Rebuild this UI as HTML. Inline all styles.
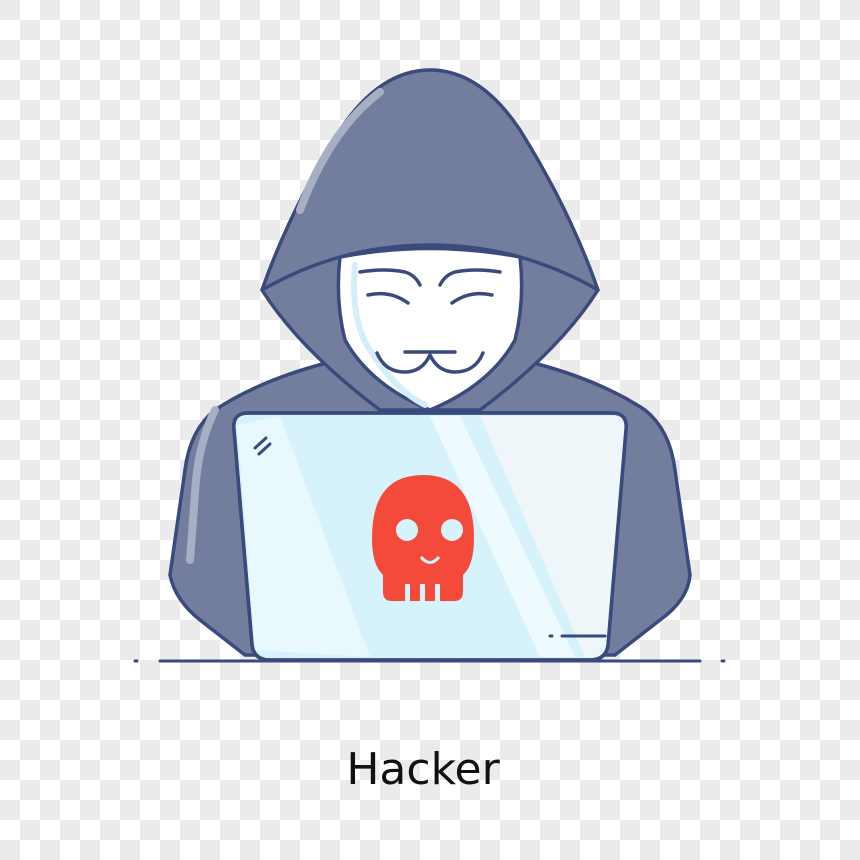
<!DOCTYPE html>
<html><head><style>
html,body{margin:0;padding:0;}
body{width:860px;height:860px;position:relative;overflow:hidden;
background:conic-gradient(#fff 25%,#ebebeb 0 50%,#fff 0 75%,#ebebeb 0);
background-size:40px 40px;}
svg{position:absolute;left:0;top:0}
.t{position:absolute;left:0;width:860px;top:744px;text-align:center;font-family:"DejaVu Sans","Liberation Sans",sans-serif;font-size:44px;color:#111;padding-right:14px;box-sizing:border-box;}
</style></head><body>
<svg width="860" height="860" viewBox="0 0 860 860">
<g stroke="#3b4a7c" stroke-width="3.5" stroke-linejoin="round" stroke-linecap="round">
<path d="M330 362 Q260 380 215 410 Q190 430 185 470 L170 575 Q175 600 200 620 L245 655 L615 655 L660 620 Q688 600 690 575 L675 470 Q670 430 645 410 Q600 380 530 362 Z" fill="#737e9f"/>
<path d="M215 410 Q200 440 196 480 L190 560" fill="none" stroke="#a7afc5" stroke-width="8"/>
<path d="M430 70 Q380 70 340 130 Q290 210 262 290 Q300 350 380 410 L480 410 Q560 350 598 290 Q570 210 520 130 Q480 70 430 70 Z" fill="#737e9f"/>
<path d="M300 210 Q330 130 380 92" fill="none" stroke="#a7afc5" stroke-width="8"/>
<path d="M262 290 Q340 245 430 245 Q520 245 598 290" fill="none"/>
<path d="M340 257 Q430 240 520 257 Q525 300 515 340 Q490 385 430 410 Q370 385 345 340 Q335 300 340 257 Z" fill="#fff"/>
<path d="M355 265 Q350 320 370 350 Q395 390 425 405" fill="none" stroke="#d4eefa" stroke-width="6"/>
<g fill="none">
<path d="M360 272 Q385 268 405 272 Q415 275 420 285"/>
<path d="M500 272 Q475 268 455 272 Q445 275 440 285"/>
<path d="M368 295 Q390 290 408 303"/>
<path d="M492 295 Q470 290 452 303"/>
<path d="M377 353 Q385 372 405 372 Q422 372 430 355 Q438 372 455 372 Q475 372 483 353"/>
<path d="M405 352 L455 352"/>
</g>
<path d="M248 413 L612 413 Q628 413 626 430 L608 645 Q606 660 590 660 L270 660 Q254 660 252 645 L234 430 Q232 413 248 413 Z" fill="#d6f3fc"/>
</g>
<path d="M237 425 L255 650 L370 657 L280 416 Z" fill="#e8f8fd"/>
<path d="M430 416 L460 416 L575 657 L540 657 Z" fill="#eefafd"/>
<path d="M480 416 L612 416 Q626 416 624 432 L607 645 Q605 657 590 657 L585 657 Z" fill="#eef6f9"/>
<path d="M248 413 L612 413 Q628 413 626 430 L608 645 Q606 660 590 660 L270 660 Q254 660 252 645 L234 430 Q232 413 248 413 Z" fill="none" stroke="#3b4a7c" stroke-width="3.5"/>
<g stroke="#3b4a7c" stroke-width="3" stroke-linecap="round" fill="none">
<path d="M255 448 L266 438 M259 454 L270 444"/>
<path d="M550 636 L552 636 M562 636 L605 636"/>
<path d="M135 661 L137 661 M160 661 L700 661 M722 661 L724 661"/>
</g>
<path d="M372 538 Q372 475 423 475 Q474 475 474 538 Q474 565 463 575 L463 592 Q463 601 454 601 L392 601 Q383 601 383 592 L383 575 Q372 565 372 538 Z" fill="#f44a3a"/>
<rect x="405" y="584" width="5" height="18" fill="#d6f3fc"/>
<rect x="420" y="584" width="5" height="18" fill="#d6f3fc"/>
<rect x="435" y="584" width="5" height="18" fill="#d6f3fc"/>
<circle cx="407" cy="530" r="11" fill="#d6f3fc"/>
<circle cx="452" cy="530" r="11" fill="#d6f3fc"/>
<path d="M421 557 Q430 568 439 557" fill="none" stroke="#d6f3fc" stroke-width="3"/>
</svg>
<div class="t">Hacker</div>
</body></html>
